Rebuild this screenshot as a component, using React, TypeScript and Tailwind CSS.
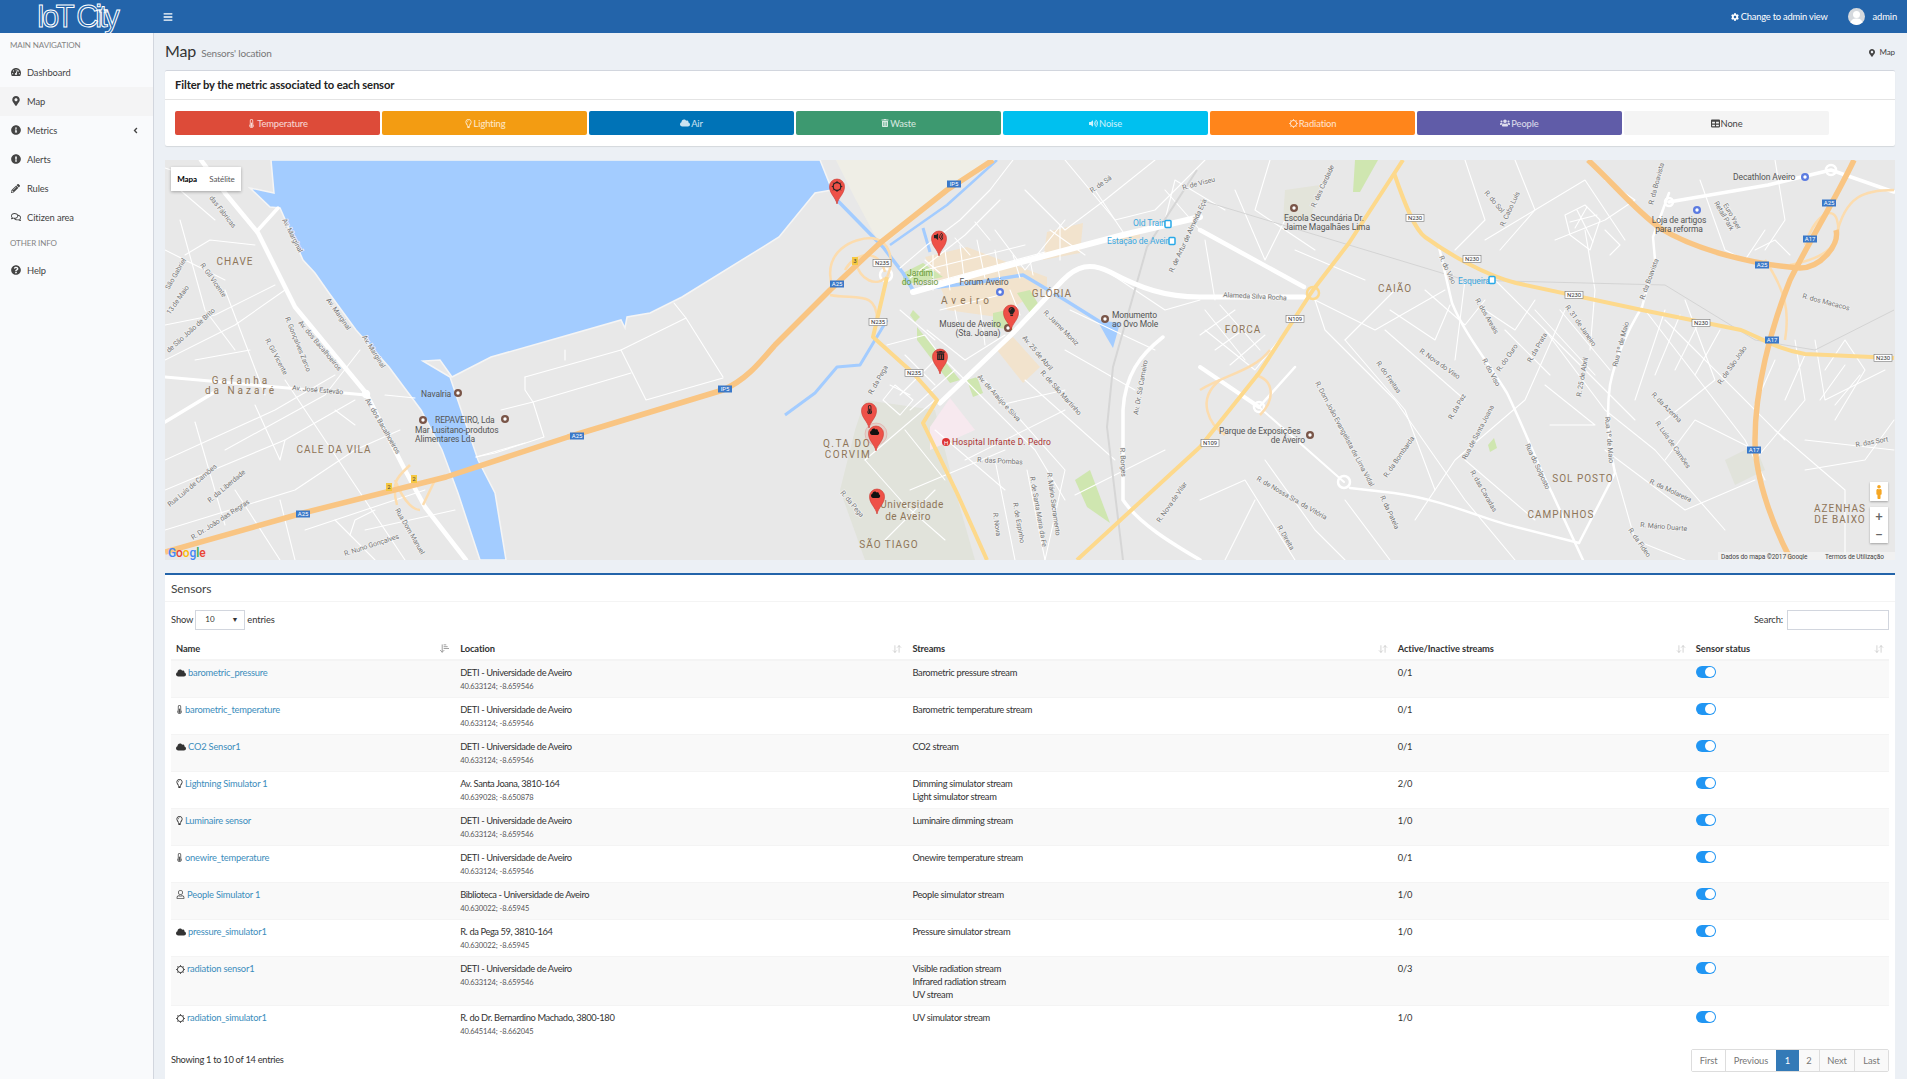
import type { ReactNode } from "react"
import {
  FaTachometerAlt,
  FaMapMarkerAlt,
  FaInfoCircle,
  FaExclamationCircle,
  FaPencilAlt,
  FaRegComments,
  FaQuestionCircle,
  FaAngleLeft,
  FaBars,
  FaCog,
  FaCloud,
  FaThermometerHalf,
  FaRegLightbulb,
  FaLightbulb,
  FaRegUser,
  FaTrashAlt,
  FaVolumeUp,
  FaUsers,
  FaTable,
  FaMale,
} from "react-icons/fa"
import { ArrowDownUp, ArrowDownNarrowWide } from "lucide-react"

type Sensor = {
  icon: "cloud" | "temp" | "bulb" | "user" | "rad"
  name: string
  place: string
  coords: string
  streams: string[]
  ratio: string
}

const DETI = "DETI - Universidade de Aveiro"
const DETI_C = "40.633124; -8.659546"

const sensors: Sensor[] = [
  { icon: "cloud", name: "barometric_pressure", place: DETI, coords: DETI_C, streams: ["Barometric pressure stream"], ratio: "0/1" },
  { icon: "temp", name: "barometric_temperature", place: DETI, coords: DETI_C, streams: ["Barometric temperature stream"], ratio: "0/1" },
  { icon: "cloud", name: "CO2 Sensor1", place: DETI, coords: DETI_C, streams: ["CO2 stream"], ratio: "0/1" },
  { icon: "bulb", name: "Lightning Simulator 1", place: "Av. Santa Joana, 3810-164", coords: "40.639028; -8.650878", streams: ["Dimming simulator stream", "Light simulator stream"], ratio: "2/0" },
  { icon: "bulb", name: "Luminaire sensor", place: DETI, coords: DETI_C, streams: ["Luminaire dimming stream"], ratio: "1/0" },
  { icon: "temp", name: "onewire_temperature", place: DETI, coords: DETI_C, streams: ["Onewire temperature stream"], ratio: "0/1" },
  { icon: "user", name: "People Simulator 1", place: "Biblioteca - Universidade de Aveiro", coords: "40.630022; -8.65945", streams: ["People simulator stream"], ratio: "1/0" },
  { icon: "cloud", name: "pressure_simulator1", place: "R. da Pega 59, 3810-164", coords: "40.630022; -8.65945", streams: ["Pressure simulator stream"], ratio: "1/0" },
  { icon: "rad", name: "radiation sensor1", place: DETI, coords: DETI_C, streams: ["Visible radiation stream", "Infrared radiation stream", "UV stream"], ratio: "0/3" },
  { icon: "rad", name: "radiation_simulator1", place: "R. do Dr. Bernardino Machado, 3800-180", coords: "40.645144; -8.662045", streams: ["UV simulator stream"], ratio: "1/0" },
]

function RadIcon({ size = 9 }: { size?: number }) {
  return (
    <svg width={size} height={size} viewBox="0 0 12 12" className="inline-block shrink-0">
      <circle cx="6" cy="6" r="4.2" fill="none" stroke="currentColor" strokeWidth="1.3" />
      <path d="M6 0v2M6 10v2M0 6h2M10 6h2M1.8 1.8l1.4 1.4M8.8 8.8l1.4 1.4M1.8 10.2l1.4-1.4M8.8 3.2l1.4-1.4" stroke="currentColor" strokeWidth="1" />
    </svg>
  )
}

function SensorIcon({ kind }: { kind: Sensor["icon"] }) {
  if (kind === "cloud") return <FaCloud size={10} className="shrink-0 text-[#333]" />
  if (kind === "temp") return <FaThermometerHalf size={9} className="-mx-[1px] shrink-0 text-[#555]" />
  if (kind === "bulb") return <FaRegLightbulb size={9} className="-mx-[1px] shrink-0 text-[#333]" />
  if (kind === "user") return <FaRegUser size={9} className="shrink-0 text-[#555]" />
  return <span className="text-[#333]"><RadIcon /></span>
}

const navItems: { label: string; icon: ReactNode; active?: boolean; arrow?: boolean }[] = [
  { label: "Dashboard", icon: <FaTachometerAlt size={10} /> },
  { label: "Map", icon: <FaMapMarkerAlt size={10} />, active: true },
  { label: "Metrics", icon: <FaInfoCircle size={10} />, arrow: true },
  { label: "Alerts", icon: <FaExclamationCircle size={10} /> },
  { label: "Rules", icon: <FaPencilAlt size={9} /> },
  { label: "Citizen area", icon: <FaRegComments size={10} /> },
]

const filters: { label: string; icon: ReactNode; cls: string }[] = [
  { label: "Temperature", icon: <FaThermometerHalf size={9} />, cls: "bg-[#dd4b39] text-white/80" },
  { label: "Lighting", icon: <FaRegLightbulb size={9} />, cls: "bg-[#f39c12] text-white/80" },
  { label: "Air", icon: <FaCloud size={10} />, cls: "bg-[#0073b7] text-white/80" },
  { label: "Waste", icon: <FaTrashAlt size={8} />, cls: "bg-[#3d9970] text-white/80" },
  { label: "Noise", icon: <FaVolumeUp size={9} />, cls: "bg-[#00c0ef] text-white/80" },
  { label: "Radiation", icon: <RadIcon />, cls: "bg-[#ff851b] text-white/80" },
  { label: "People", icon: <FaUsers size={10} />, cls: "bg-[#605ca8] text-white/80" },
  { label: "None", icon: <FaTable size={9} />, cls: "bg-[#f4f4f4] text-[#444]" },
]

// map drawing, coordinates are px inside the 1730x400 map
const WATER =
  "M106 0 L109 33 L85 28 L105 47 L115 48 L138 100 L150 113 L164 133 L191 170 L224 207 L256 250 L277 290 L293 333 L315 400 L341 400 L330 333 L313 300 L285 217 L258 201 L275 200 L287 217 L326 197 L393 178 L456 160 L460 168 L462 157 L485 153 L517 137 L614 77 L650 33 L667 30 L655 0 Z"

const thick: [string, number][] = [
  ["M36 0L60 33L93 73L130 147L201 233L240 310L260 347L301 400", 4.5],
  ["M93 70L113 48", 3.5],
  ["M0 217L56 222L201 235", 3],
  ["M0 262L48 233", 3.5],
  ["M748 132L815 113L958 75L1035 57", 6],
  ["M775 243L848 173L898 120C912 106 925 102 945 112C975 128 1000 137 1035 137L1139 137", 5],
  ["M998 177C975 195 960 215 958 250L958 340C975 365 1010 385 1035 400", 3.5],
  ["M1035 70L1139 127", 4.5],
  ["M1035 207L1094 247", 4],
  ["M1094 247L1130 207", 2.5],
  ["M1094 247L1179 322", 2],
  ["M1185 328L1229 333C1280 340 1320 360 1351 367L1414 383", 2.5],
  ["M1274 87L1287 143C1300 175 1325 205 1342 233C1360 270 1375 310 1387 333L1418 400", 2.5],
  ["M1477 147C1460 175 1450 200 1445 225C1440 260 1445 290 1450 313L1414 383", 2.5],
  ["M1504 33L1488 77L1490 100L1477 147", 2.5],
  ["M1504 42L1603 25L1666 10L1729 32", 3.5],
]

const thin = [
  "M0 8L36 20", "M0 90L60 120", "M15 60L40 150L70 190", "M0 165L50 155L110 125", "M0 200L70 165L120 130", "M30 200L85 190", "M60 130L100 235", "M15 30L50 60", "M20 95L45 80L90 85",
  "M0 300L110 250L170 215", "M30 262L60 365", "M60 290L160 235L195 190", "M0 330L120 280L190 240", "M120 220L200 340L240 400", "M90 245L115 300L120 280", "M170 250L190 265",
  "M0 370L130 330L190 290L235 270", "M70 330L115 400", "M115 340L130 400", "M140 370L260 330", "M170 360L210 400", "M200 370L290 350", "M220 235L250 238", "M185 375L190 360L210 350",
  "M360 217L456 190L481 240L558 218", "M360 217L360 230L368 242L466 213", "M336 250L368 242L379 277L330 293L311 297", "M456 190L521 158L558 217", "M509 143L521 158", "M311 297L360 283", "M400 200L400 190",
  "M735 108L762 85L795 60L825 30L848 0", "M745 118L800 75L835 40", "M760 100L775 113", "M790 78L805 95", "M810 62L825 80", "M830 70L860 110L900 60", "M860 30L900 70L940 40L990 0", "M900 0L950 60L990 50L1040 0", "M930 30L960 75", "M1000 60L1010 20L1060 50",
  "M1000 30L1035 70", "M762 170L800 200L840 175", "M775 195L830 250L870 290L900 340", "M820 220L900 310L880 400", "M860 220L950 300", "M770 240L700 300", "M770 270L840 330", "M800 300L900 250",
  "M830 300L850 400", "M862 310L880 400", "M745 330L840 290", "M835 245L900 230", "M900 190L970 230", "M905 150L990 190", "M940 110L1000 150L1035 140", "M910 335L1000 290",
  "M768 95L768 130", "M780 90L785 130", "M795 85L800 125", "M812 80L820 118", "M830 90L835 120", "M848 95L855 118", "M865 100L868 115", "M760 110L860 85", "M770 122L880 92", "M885 70L920 95", "M895 65L895 100",
  "M775 150L835 135", "M790 150L795 175", "M815 145L820 185", "M845 130L855 155", "M735 150L770 180", "M722 185L760 175L775 195", "M740 195L770 225", "M735 235L770 200", "M745 250L790 210", "M725 225L745 235", "M730 225L748 240L735 255L718 240Z", "M740 270L780 320", "M700 300L740 345L780 380", "M720 380L770 330",
  "M1040 80L1050 140", "M1070 30L1100 100L1120 60", "M1105 0L1090 50L1150 90", "M1130 90L1200 120", "M1150 140L1210 170L1280 130", "M1150 140L1160 170L1230 240L1300 340L1350 400", "M1040 170L1090 210L1130 160",
  "M1040 150L1080 200", "M1055 145L1095 190", "M1035 175L1070 150", "M1050 190L1085 165", "M1065 205L1100 175",
  "M1180 180L1240 250L1270 330", "M1230 130L1180 180", "M1220 170L1300 240", "M1290 200L1300 120", "M1330 120L1400 190L1470 260", "M1380 170L1440 250L1490 290L1560 370", "M1400 150L1360 240L1290 300L1250 360", "M1300 300L1370 360", "M1225 150L1270 180L1285 145", "M1260 130L1300 165L1320 140", "M1320 150L1350 170L1370 140", "M1340 170L1385 215", "M1370 150L1430 215", "M1395 150L1445 210", "M1380 225L1430 265L1385 265",
  "M1300 0L1320 60L1290 90", "M1350 0L1370 50L1335 90", "M1320 80L1420 20L1460 80", "M1390 80L1440 60L1470 40L1440 20", "M1420 70L1430 130L1425 190", "M1480 150L1580 280L1600 320", "M1500 160L1620 280", "M1520 140L1550 220L1500 260", "M1500 150L1480 210L1470 240", "M1515 155L1490 215", "M1535 160L1510 210", "M1555 170L1530 215",
  "M1400 55L1420 45L1435 60L1425 90L1405 75Z", "M1412 50L1428 82", "M1422 47L1410 68", "M1405 62L1432 55", "M1440 70L1455 85L1445 95",
  "M1440 290L1520 350L1590 320", "M1450 310L1470 380L1520 400", "M1630 180L1640 240L1590 300", "M1650 180L1660 240L1720 210", "M1640 280L1729 290", "M1610 270L1680 330L1680 400", "M1640 310L1700 300L1729 260", "M1660 210L1680 180L1700 210L1670 260", "M1655 240L1680 205", "M1670 245L1695 215", "M1640 195L1620 240", "M1610 200L1590 245",
  "M1100 300L1150 370L1180 400", "M1035 340L1080 320L1130 400", "M1180 340L1225 400", "M1060 400L1090 340", "M1535 20L1560 90L1580 100L1600 70", "M1610 0L1620 60L1600 90", "M1590 90L1610 80L1625 95", "M1500 300L1530 260L1590 290",
]

const orange = [
  "M0 392L138 353L281 317L403 277L558 230C580 220 591 207 610 185L635 160L665 130L715 83L782 30L828 0",
  "M1423 0C1450 25 1470 50 1495 68C1530 90 1590 105 1635 108C1655 108 1675 85 1671 70",
  "M1689 0C1670 40 1645 80 1625 120C1605 170 1590 230 1590 280C1590 320 1610 370 1626 400",
]
const yellow = [
  "M722 117L708 177L748 213L772 240L758 263L792 333L822 400",
  "M912 400L1035 287L1094 213L1148 130L1184 83L1238 0",
  "M1229 13C1240 45 1250 70 1260 77C1285 95 1320 115 1351 123L1477 150L1576 170C1600 180 1615 190 1640 194L1729 198",
]
const loops = [
  "M668 130C655 90 690 78 706 78C725 80 730 100 722 117",
  "M680 110C690 92 714 88 720 112",
  "M665 135C690 140 712 130 712 160",
  "M690 100C695 122 712 126 720 118",
  "M1671 77C1680 35 1700 30 1729 30",
  "M1600 100C1620 130 1625 150 1620 180",
  "M1625 105C1650 100 1680 90 1672 60C1668 45 1650 55 1640 85",
  "M1035 230C1060 215 1090 210 1105 190",
  "M1055 220C1030 240 1045 265 1060 275",
  "M1090 215C1110 220 1110 240 1095 255",
  "M230 320C240 345 250 350 255 350M245 305C235 315 225 320 232 345",
  "M270 320L258 345",
]

type Label = [string, number, number, number?]
const roadLabels: Label[] = [
  ["Av. Marginal", 117, 60, 63], ["Av. Marginal", 161, 140, 55], ["Av. Marginal", 197, 177, 58], ["das Fábricas", 44, 38, 52],
  ["R. Gil Vicente", 35, 105, 55], ["R. Gil Vicente", 100, 180, 62], ["São Gabriel", 4, 130, -60], ["13 de Maio", 5, 155, -55],
  ["de São João de Brito", 4, 193, -42], ["R. Gonçalves Zarco", 120, 158, 68], ["Av. dos Bacalhoeiros", 133, 163, 50], ["Av. dos Bacalhoeiros", 200, 240, 60],
  ["Av. José Estevão", 127, 230, 5], ["Rua Luís de Camões", 5, 347, -40], ["R. da Liberdade", 45, 343, -40], ["R. Dr. João das Regras", 28, 380, -33],
  ["Rua Dom Manuel", 230, 350, 60], ["R. Nuno Gonçalves", 180, 396, -18], ["R. Jaime Moniz", 878, 153, 45], ["Av. 25 de Abril", 857, 178, 50],
  ["R. de São Martinho", 875, 213, 48], ["Av. de Araújo e Silva", 812, 217, 48], ["R. da Pega", 707, 235, -60], ["R. da Pega", 675, 333, 50],
  ["R. das Pombas", 812, 302, 3], ["R. Nova", 828, 353, 82], ["R. de Espinho", 848, 343, 80], ["R. de Santa Maria da Fe", 865, 317, 80],
  ["R. Mário Sacramento", 882, 313, 82], ["R. Borges", 955, 288, 87], ["Av. Dr. Sá Carneiro", 973, 255, -80], ["R. Nova de Vilar", 995, 363, -55],
  ["R. de Artur de Almeida Eça", 1008, 113, -65], ["R. de Sá", 927, 33, -35], ["R. de Viseu", 1018, 30, -15], ["Alameda Silva Rocha", 1058, 137, 3],
  ["R. das Cardade", 1150, 48, -65], ["R. do Sol", 1319, 33, 50], ["R. Cabo Luís", 1339, 67, -65], ["R. do Viso", 1274, 97, 65],
  ["R. dos Areais", 1310, 140, 60], ["R. do Ouro", 1335, 212, -55], ["R. da Prata", 1366, 203, -60], ["R. Nova do Viso", 1254, 192, 35],
  ["R. do Viso", 1317, 200, 62], ["R. do Freitas", 1211, 203, 55], ["R. da Paz", 1287, 260, -60], ["R. Dom João Evangelista de Lima Vidal", 1150, 223, 62],
  ["R. de Nossa Sra. da Vitória", 1091, 320, 30], ["R. da Bombarda", 1222, 318, -55], ["Rua de Santa Joana", 1301, 300, -62], ["R. das Cavadas", 1305, 312, 60],
  ["Rua do Solposto", 1360, 285, 65], ["R. da Patela", 1215, 337, 65], ["R. Direita", 1112, 367, 60], ["R. 31 de Janeiro", 1400, 147, 55],
  ["Rua 1º de Maio", 1452, 207, -75], ["R. da Boavista", 1479, 140, -70], ["R. da Boavista", 1488, 45, -75], ["R. 25 de Abril", 1416, 237, -80],
  ["Rua 1º de Maio", 1440, 257, 85], ["R. da Azenha", 1486, 235, 45], ["R. Luís de Camões", 1490, 263, 55], ["R. da Molareira", 1484, 323, 25],
  ["R. Mário Duarte", 1475, 367, 5], ["R. da Fideo", 1463, 370, 55], ["R. de São João", 1556, 225, -55], ["R. dos Macacos", 1637, 138, 15],
  ["R. das Sort", 1691, 287, -10], ["Euro Yser", 1558, 45, 60], ["Retail Park", 1549, 43, 60],
]

const places: [string, number, number, number][] = [
  ["CHAVE", 70, 105, 1], ["CALE DA VILA", 169, 293, 1], ["GLÓRIA", 887, 137, 1], ["Aveiro", 802, 144, 4], ["Q.TA DO", 682, 287, 1.5], ["CORVIM", 683, 298, 1.5],
  ["Universidade", 747, 348, 0.5], ["de Aveiro", 743, 360, 0.5], ["SÃO TIAGO", 724, 388, 1], ["CAIÃO", 1230, 132, 1], ["FORCA", 1078, 173, 1], ["SOL POSTO", 1418, 322, 1],
  ["CAMPINHOS", 1396, 358, 1], ["AZENHAS", 1675, 352, 1], ["DE BAIXO", 1675, 363, 1], ["Gafanha", 76, 224, 3], ["da Nazaré", 76, 234, 3],
]

const pois: [string, number, number, ("start" | "middle" | "end")?][] = [
  ["Navalria", 256, 237], ["REPAVEIRO, Lda", 270, 263], ["Mar Lusitano-produtos", 250, 273], ["Alimentares Lda", 250, 282],
  ["Forum Aveiro", 819, 125, "middle"], ["Museu de Aveiro", 805, 167, "middle"], ["(Sta. Joana)", 813, 176, "middle"],
  ["Monumento", 947, 158], ["ao Ovo Mole", 947, 167], ["Escola Secundária Dr.", 1119, 61], ["Jaime Magalhães Lima", 1119, 70],
  ["Parque de Exposições", 1054, 274], ["de Aveiro", 1140, 283, "end"], ["Decathlon Aveiro", 1568, 20],
  ["Loja de artigos", 1514, 63, "middle"], ["para reforma", 1514, 72, "middle"],
]

const poiDots: [number, number, string][] = [
  [293, 233, "#795548"], [340, 259, "#795548"], [258, 260, "#795548"], [843, 168, "#795548"], [940, 159, "#795548"], [1129, 48, "#795548"], [1145, 275, "#795548"],
  [835, 132, "#5b7be0"], [1640, 17, "#5b7be0"], [1532, 50, "#5b7be0"],
]

const shields: [string, number, number][] = [
  ["IP5", 560, 229], ["A25", 412, 276], ["A25", 138, 354], ["IP5", 789, 24], ["A25", 672, 124], ["A25", 1664, 43], ["A17", 1645, 79], ["A25", 1597, 105], ["A17", 1607, 180], ["A17", 1589, 290],
]
const nShields: [string, number, number][] = [
  ["N235", 717, 103], ["N235", 713, 162], ["N235", 749, 213], ["N230", 1250, 58], ["N230", 1307, 99], ["N230", 1409, 135], ["N230", 1536, 163], ["N230", 1718, 198], ["N109", 1130, 159], ["N109", 1045, 283],
]

function Pin({ x, y, children, halo }: { x: number; y: number; children: ReactNode; halo?: boolean }) {
  // x/y is the tip of the pin
  return (
    <g transform={`translate(${x} ${y})`}>
      {halo && <circle cx="0" cy="-17" r="11" fill="#e57373" fillOpacity="0.15" stroke="#e57373" strokeOpacity="0.3" />}
      <path d="M0 0C-1.5 -7 -7.5 -10 -7.5 -17.5A7.5 7.5 0 1 1 7.5 -17.5C7.5 -10 1.5 -7 0 0Z" fill="#ee5148" stroke="#c9362e" strokeWidth="0.6" />
      {children}
    </g>
  )
}

function MapDrawing() {
  return (
    <svg viewBox="0 0 1730 400" width="1730" height="400" className="block font-['Roboto',sans-serif]">
      <rect width="1730" height="400" fill="#e8e8e8" />
      <path d="M671 0L822 0L716 87L691 40Z" fill="#efeee6" />
      <path d="M700 240L770 250L790 330L810 400L700 400L675 330L690 270Z" fill="#e1e3db" />
      <path d="M765 267L785 238L810 270L765 290Z" fill="#f7e9ef" />
      <path d="M1120 30L1155 25L1145 60L1118 60Z" fill="#e3e4da" />
      <path d="M1560 300L1590 285L1600 310L1570 325Z" fill="#e1e3db" />
      {["M760 97L802 87L828 97L882 117L882 127L832 157L782 150L778 133Z", "M882 72L918 63L915 93L878 100Z", "M832 190L848 177L875 207L858 223Z", "M950 75L975 68L975 78L950 82Z"].map((d) => (
        <path key={d} d={d} fill="#f2e3cd" />
      ))}
      {["M752 167L795 220L785 223L752 180Z", "M738 113L758 103L778 117L738 125Z", "M828 153L842 150L848 170L828 167Z", "M852 133L865 130L875 147L865 153Z", "M802 220L812 217L818 233L808 237Z", "M910 320L925 310L945 363L922 347Z", "M748 150L755 157L750 162L745 155Z", "M1190 0L1213 0L1195 32L1188 32Z", "M1323 285L1329 278L1332 288L1325 292Z"].map((d) => (
        <path key={d} d={d} fill="#cfe6b0" />
      ))}

      <path d={WATER} fill="#a3ccff" stroke="#f5f5f5" strokeWidth="1.5" />
      <g fill="none" stroke="#a3ccff" strokeLinejoin="round">
        <path d="M667 30L672 40L718 87L738 113L748 130L815 122L858 115L900 140L940 165" strokeWidth="3.5" />
        <path d="M725 85L782 45L832 0" strokeWidth="2.5" />
        <path d="M758 68L765 92" strokeWidth="3" />
        <path d="M620 255L650 233L672 207L695 205L722 160" strokeWidth="3" />
      </g>
      <path d="M932 160L955 163L948 188L942 178Z" fill="#a3ccff" />

      <g fill="none" stroke="#fff" strokeWidth="1.1" strokeLinecap="round" strokeLinejoin="round">
        {thin.map((d) => (
          <path key={d} d={d} />
        ))}
      </g>
      <path d="M1032 10L982 87L948 207L942 267L958 400" fill="none" stroke="#d6d6d6" strokeWidth="2" />
      <path d="M1035 40L1300 120L1500 125L1590 180L1650 190L1729 150" fill="none" stroke="#d4d4d4" strokeWidth="1" />
      <g fill="none" stroke="#fff" strokeLinecap="round" strokeLinejoin="round">
        {thick.map(([d, w]) => (
          <path key={d} d={d} strokeWidth={w} />
        ))}
      </g>
      <g fill="none" stroke="#fff" strokeWidth="2.5">
        <circle cx="201" cy="234" r="3" />
        <circle cx="721" cy="115" r="6" />
        <circle cx="1094" cy="247" r="5" />
        <circle cx="1179" cy="322" r="6" />
        <circle cx="1504" cy="42" r="4" />
        <circle cx="1666" cy="10" r="5" />
      </g>
      <g fill="none" stroke="#fcdcae" strokeWidth="2.5" strokeLinejoin="round">
        {loops.map((d) => (
          <path key={d} d={d} />
        ))}
      </g>
      <g fill="none" stroke="#fdd98c" strokeWidth="4" strokeLinejoin="round">
        {yellow.map((d) => (
          <path key={d} d={d} />
        ))}
      </g>
      <circle cx="1148" cy="133" r="6" fill="none" stroke="#fdd98c" strokeWidth="2.5" />
      <g fill="none" stroke="#f9c583" strokeWidth="5.5" strokeLinejoin="round">
        {orange.map((d) => (
          <path key={d} d={d} />
        ))}
      </g>

      <g fontSize="7" fill="#757575">
        {roadLabels.map(([t, x, y, r]) => (
          <text key={t + x} x={x} y={y} transform={`rotate(${r ?? 0} ${x} ${y})`} stroke="#f2f2f2" strokeWidth="1.5" paintOrder="stroke">
            {t}
          </text>
        ))}
      </g>
      <g fontSize="10" fill="#8e7558" textAnchor="middle">
        {places.map(([t, x, y, s]) => (
          <text key={t} x={x} y={y} letterSpacing={s}>{t}</text>
        ))}
      </g>
      <g fontSize="8.5" fill="#555">
        {pois.map(([t, x, y, a]) => (
          <text key={t} x={x} y={y} textAnchor={a ?? "start"}>{t}</text>
        ))}
      </g>
      {poiDots.map(([x, y, c]) => (
        <g key={x}>
          <circle cx={x} cy={y} r="4" fill={c} />
          <circle cx={x} cy={y} r="1.7" fill="#fff" />
        </g>
      ))}
      <text x="755" y="116" fontSize="8.5" fill="#6b9a3a" textAnchor="middle">Jardim</text>
      <text x="755" y="125" fontSize="8.5" fill="#6b9a3a" textAnchor="middle">do Rossio</text>
      <g fontSize="8.5" fill="#3aa7e0">
        <text x="968" y="66">Old Train</text>
        <text x="942" y="84">Estação de Aveiro</text>
        <text x="1293" y="124">Esqueira</text>
      </g>
      {[[1003, 64], [1007, 81], [1327, 120]].map(([x, y]) => (
        <rect key={x} x={x - 3} y={y - 3.5} width="6" height="7" rx="1" fill="#fff" stroke="#29a9e8" strokeWidth="1.5" />
      ))}
      <circle cx="781" cy="282" r="4" fill="#d33" />
      <text x="781" y="284.5" fontSize="6" fill="#fff" textAnchor="middle">H</text>
      <text x="787" y="285" fontSize="8.5" fill="#a33" letterSpacing="0.2">Hospital Infante D. Pedro</text>

      {shields.map(([t, x, y]) => (
        <g key={t + x}>
          <rect x={x - 7} y={y - 3.5} width="14" height="7" fill="#3a78c8" />
          <text x={x} y={y + 2.3} fontSize="6" fill="#fff" textAnchor="middle">{t}</text>
        </g>
      ))}
      {nShields.map(([t, x, y]) => (
        <g key={t + x}>
          <rect x={x - 9} y={y - 3.5} width="18" height="7" fill="#fff" stroke="#777" strokeWidth="0.6" />
          <text x={x} y={y + 2.3} fontSize="6" fill="#333" textAnchor="middle">{t}</text>
        </g>
      ))}
      {[[249, 319, "2"], [224, 327, "2"], [690, 101, "3"]].map(([x, y, t]) => (
        <g key={String(x)}>
          <rect x={Number(x) - 3} y={Number(y) - 4} width="6" height="8" fill="#f5c842" />
          <text x={Number(x)} y={Number(y) + 2} fontSize="6" fill="#444" textAnchor="middle">{t}</text>
        </g>
      ))}

      <Pin x={672} y={44}>
        <g transform="translate(-5.5 -23)" color="#222"><RadIcon size={11} /></g>
      </Pin>
      <Pin x={774} y={96}>
        <FaVolumeUp x={-5} y={-24} width={10} height={10} color="#222" />
      </Pin>
      <Pin x={846} y={170}>
        <FaLightbulb x={-4} y={-23} width={8} height={10} color="#222" />
      </Pin>
      <Pin x={775} y={214}>
        <FaTrashAlt x={-4} y={-23} width={8} height={9} color="#222" />
      </Pin>
      <Pin x={704} y={268}>
        <FaThermometerHalf x={-4} y={-23} width={8} height={11} color="#222" />
      </Pin>
      <Pin x={711} y={291} halo>
        <FaCloud x={-6} y={-24} width={12} height={12} color="#111" />
      </Pin>
      <Pin x={712} y={354}>
        <FaCloud x={-6} y={-24} width={12} height={12} color="#111" />
      </Pin>

      <text x="3" y="397" fontSize="12" fontWeight="500">
        <tspan fill="#4285f4">G</tspan>
        <tspan fill="#ea4335">o</tspan>
        <tspan fill="#fbbc05">o</tspan>
        <tspan fill="#4285f4">g</tspan>
        <tspan fill="#34a853">l</tspan>
        <tspan fill="#ea4335">e</tspan>
      </text>
      <rect x="1553" y="392" width="177" height="8" fill="#f5f5f5" fillOpacity="0.7" />
      <text x="1556" y="398.5" fontSize="6.5" fill="#444">Dados do mapa ©2017 Google</text>
      <text x="1660" y="398.5" fontSize="6.5" fill="#444">Termos de Utilização</text>
    </svg>
  )
}

function Toggle() {
  return (
    <span className="flex h-[12px] w-[20px] items-center justify-end rounded-full bg-[#2196f3] pr-[1px]">
      <span className="h-[10px] w-[10px] rounded-full bg-white" />
    </span>
  )
}

function Th({ label, sorted }: { label: string; sorted?: boolean }) {
  return (
    <th className="border-b-2 border-[#f4f4f4] px-[5px] pb-[4px] pt-[5px] text-left align-middle font-bold text-[#333]">
      <div className="flex items-center justify-between">
        <span>{label}</span>
        {sorted ? <ArrowDownNarrowWide size={11} className="text-[#999]" /> : <ArrowDownUp size={10} className="text-[#ccc]" />}
      </div>
    </th>
  )
}

export default function App() {
  return (
    <div className="flex h-screen flex-col overflow-hidden bg-[#ecf0f5] font-['Lato',sans-serif] text-[9.33px] leading-[13px] tracking-[-0.1px] text-[#333]">
      <header className="flex h-[33px] shrink-0 items-center bg-[#2364aa] text-white">
        <div className="flex w-[153px] justify-center">
          <span className="font-['Liberation_Sans',sans-serif] text-[31px] leading-none tracking-[-3.3px] text-transparent [-webkit-text-stroke:1px_white]">IoT City</span>
        </div>
        <FaBars size={10} className="ml-[10px]" />
        <div className="ml-auto flex items-center pr-[10px]">
          <FaCog size={8} className="mr-[2px]" />
          <span className="tracking-[-0.2px]">Change to admin view</span>
          <svg width="17" height="19" viewBox="0 0 17 19" className="ml-[20px] mr-[8px]">
            <circle cx="8.5" cy="9.5" r="8.5" fill="#d5d9de" />
            <circle cx="8.5" cy="7.5" r="3.5" fill="#fff" />
            <path d="M2.5 15.5C3.5 12 6 11.5 8.5 11.5S13.5 12 14.5 15.5A8.5 8.5 0 0 1 2.5 15.5Z" fill="#fff" />
          </svg>
          <span>admin</span>
        </div>
      </header>

      <div className="flex min-h-0 flex-1">
        <aside className="w-[154px] shrink-0 border-r border-[#d2d6de] bg-[#f9fafc] text-[#444]">
          <div className="flex h-[24.5px] items-center pl-[10px] text-[8px] text-[#848484]">MAIN NAVIGATION</div>
          {navItems.map((item) => (
            <div key={item.label} className={`flex h-[29px] items-center pl-[11px] pr-[13px] ${item.active ? "bg-[#f4f4f5]" : ""}`}>
              <span className="flex w-[16px] shrink-0">{item.icon}</span>
              <span>{item.label}</span>
              {item.arrow && <FaAngleLeft size={9} className="ml-auto" />}
            </div>
          ))}
          <div className="flex h-[24px] items-center pl-[10px] text-[8px] text-[#848484]">OTHER INFO</div>
          <div className="flex h-[29px] items-center pl-[11px]">
            <span className="flex w-[16px] shrink-0"><FaQuestionCircle size={10} /></span>
            <span>Help</span>
          </div>
        </aside>

        <main className="flex min-w-0 flex-1 flex-col pl-[11px] pr-[12px]">
          <div className="flex h-[37px] shrink-0 items-center justify-between pb-[1px]">
            <div className="flex items-baseline">
              <h1 className="text-[16px] leading-none text-[#333]">Map</h1>
              <span className="ml-[5px] text-[10px] tracking-[-0.2px] text-[#777]">Sensors' location</span>
            </div>
            <div className="mt-[3px] flex items-center text-[8px] text-[#444]">
              <FaMapMarkerAlt size={8} className="mr-[4px]" />
              <span>Map</span>
            </div>
          </div>

          <section className="h-[76px] shrink-0 rounded-[2px] border-t border-[#d2d6de] bg-white shadow-[0_1px_1px_rgba(0,0,0,0.1)]">
            <div className="flex h-[29px] items-center border-b border-[#e4e4e4] pb-[1px] pl-[10px] text-[11.2px] font-bold text-[#222]">
              Filter by the metric associated to each sensor
            </div>
            <div className="flex gap-[2px] pl-[10px] pt-[11px]">
              {filters.map((f) => (
                <div key={f.label} className={`flex h-[24px] w-[205px] items-center justify-center gap-[1px] rounded-[2px] ${f.cls}`}>
                  {f.icon}
                  <span>{f.label}</span>
                </div>
              ))}
            </div>
          </section>

          <div className="relative mt-[14px] h-[400px] shrink-0">
            <MapDrawing />
            <div className="absolute left-[6px] top-[7px] flex h-[24px] bg-white text-[8px] shadow-[0_1px_3px_rgba(0,0,0,0.3)]">
              <span className="flex w-[32px] items-center justify-center font-bold text-black">Mapa</span>
              <span className="flex w-[38px] items-center justify-center text-[#565656]">Satélite</span>
            </div>
            <div className="absolute left-[1705px] top-[322px] flex h-[19px] w-[18px] items-center justify-center bg-white shadow-[0_1px_2px_rgba(0,0,0,0.3)]">
              <FaMale size={14} className="text-[#f5a623]" />
            </div>
            <div className="absolute left-[1705px] top-[347px] flex h-[36px] w-[18px] flex-col items-center justify-around bg-white text-[13px] font-bold leading-none text-[#666] shadow-[0_1px_2px_rgba(0,0,0,0.3)]">
              <span>+</span>
              <span>−</span>
            </div>
          </div>

          <section className="mt-[13px] min-h-0 flex-1 border-t-2 border-[#2364aa] bg-white">
            <div className="flex h-[27px] items-center border-b border-[#f4f4f4] pl-[6px] text-[12px] text-[#444]">Sensors</div>
            <div className="px-[6px]">
              <div className="flex h-[31px] items-center justify-between pt-[4px]">
                <div className="flex items-center">
                  <span>Show</span>
                  <div className="mx-[2px] flex h-[20px] w-[50px] items-center justify-between border border-[#d2d6de] pl-[9px] pr-[6px] text-[8px]">
                    <span>10</span>
                    <span className="text-[7px] text-[#333]">▼</span>
                  </div>
                  <span>entries</span>
                </div>
                <div className="flex items-center">
                  <span className="mr-[4px]">Search:</span>
                  <input className="h-[20px] w-[102px] border border-[#d2d6de] bg-white" />
                </div>
              </div>

              <table className="mt-[4px] w-full table-fixed border-collapse">
                <colgroup>
                  <col className="w-[284px]" />
                  <col className="w-[452px]" />
                  <col className="w-[485px]" />
                  <col className="w-[298px]" />
                  <col className="w-[198px]" />
                </colgroup>
                <thead>
                  <tr>
                    <Th label="Name" sorted />
                    <Th label="Location" />
                    <Th label="Streams" />
                    <Th label="Active/Inactive streams" />
                    <Th label="Sensor status" />
                  </tr>
                </thead>
                <tbody>
                  {sensors.map((s, i) => (
                    <tr key={s.name} className={i % 2 === 0 ? "bg-[#f9f9f9]" : "bg-white"}>
                      <td className="border-t border-[#f4f4f4] px-[5px] pb-[4px] pt-[5px] align-top">
                        <div className="flex items-center gap-[2px]">
                          <SensorIcon kind={s.icon} />
                          <span className="tracking-[-0.2px] text-[#3c8dbc]">{s.name}</span>
                        </div>
                      </td>
                      <td className="border-t border-[#f4f4f4] px-[5px] pb-[4px] pt-[5px] align-top">
                        <div className="tracking-[-0.4px]">{s.place}</div>
                        <div className="mt-[2px] text-[7.5px] leading-[12px] text-[#555]">{s.coords}</div>
                      </td>
                      <td className="border-t border-[#f4f4f4] px-[5px] pb-[4px] pt-[5px] align-top tracking-[-0.3px]">
                        {s.streams.map((st) => (
                          <div key={st}>{st}</div>
                        ))}
                      </td>
                      <td className="border-t border-[#f4f4f4] px-[5px] pb-[4px] pt-[5px] align-top">{s.ratio}</td>
                      <td className="border-t border-[#f4f4f4] px-[5px] pb-[4px] pt-[5px] align-top">
                        <Toggle />
                      </td>
                    </tr>
                  ))}
                </tbody>
              </table>

              <div className="mt-[7px] flex items-start justify-between">
                <span className="mt-[4px] tracking-[-0.3px]">Showing 1 to 10 of 14 entries</span>
                <div className="flex h-[23px] rounded-[2px] border border-[#ddd] text-[#777]">
                  <span className="flex w-[34px] items-center justify-center border-r border-[#ddd] bg-white">First</span>
                  <span className="flex w-[50px] items-center justify-center bg-white">Previous</span>
                  <span className="flex w-[23px] items-center justify-center bg-[#337ab7] text-white">1</span>
                  <span className="flex w-[21px] items-center justify-center border-r border-[#ddd] bg-[#f9f9f9]">2</span>
                  <span className="flex w-[35px] items-center justify-center border-r border-[#ddd] bg-[#f9f9f9]">Next</span>
                  <span className="flex w-[33px] items-center justify-center bg-[#f9f9f9]">Last</span>
                </div>
              </div>
            </div>
          </section>
        </main>
      </div>
    </div>
  )
}
